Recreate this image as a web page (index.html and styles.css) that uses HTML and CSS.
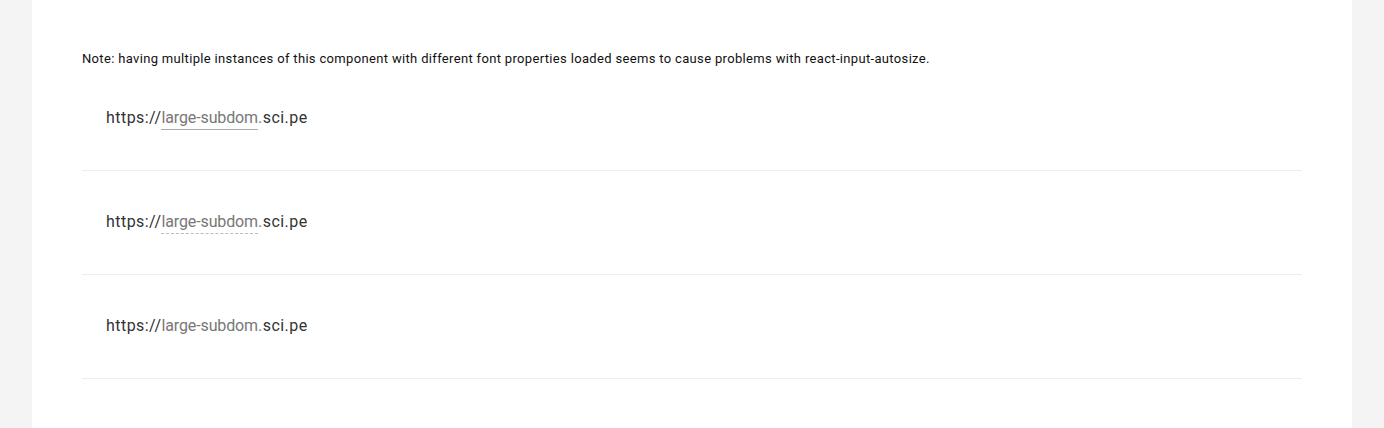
FILE: index.html
```html
<!DOCTYPE html>
<html>
<head>
<meta charset="utf-8">
<link rel="stylesheet" href="styles.css">
</head>
<body>
<div class="page">
  <div class="panel">
    <p class="note">Note: having multiple instances of this component with different font properties loaded seems to cause problems with react-input-autosize.</p>
    <div class="row">
      <span class="url">https://<span class="sub sub-solid">large-subdom</span><span class="dot">.</span>sci.pe</span>
    </div>
    <div class="row">
      <span class="url">https://<span class="sub sub-dashed">large-subdom</span><span class="dot">.</span>sci.pe</span>
    </div>
    <div class="row">
      <span class="url">https://<span class="sub">large-subdom</span><span class="dot">.</span>sci.pe</span>
    </div>
  </div>
</div>
</body>
</html>
```

FILE: styles.css
```css
html, body {
  margin: 0;
  padding: 0;
  background: #f4f4f4;
  font-family: Roboto, "Liberation Sans", sans-serif;
}
.page {
  padding: 0 32px;
  height: 428px;
  overflow: hidden;
}
.panel {
  background: #fff;
  padding: 50px 50px 60px;
  min-height: 100%;
  box-sizing: border-box;
}
.note {
  margin: 0;
  font-size: 13px;
  line-height: 17px;
  letter-spacing: 0.335px;
  color: #111;
}
.row {
  padding: 41px 24px 41px;
  border-bottom: 1px solid #eeeeee;
  height: 21px;
}
.url {
  font-size: 16px;
  line-height: 20px;
  letter-spacing: 0.45px;
  color: #333;
}
.sub {
  color: #777;
  display: inline-block;
  border-bottom: 1px solid transparent;
  line-height: 20px;
  padding-bottom: 1px;
  letter-spacing: -0.12px;
}
.dot {
  color: #777;
}
.sub-solid {
  border-bottom-color: #aaa;
}
.sub-dashed {
  border-bottom: 1px dashed #bbb;
}
```
